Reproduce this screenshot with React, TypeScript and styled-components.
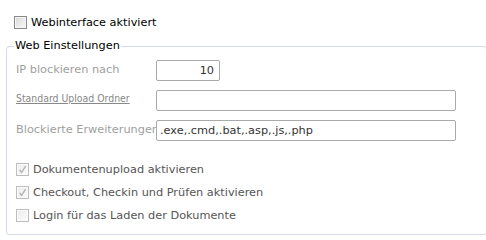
import React from "react";
import styled, { createGlobalStyle } from "styled-components";

const GlobalStyle = createGlobalStyle`
  html, body {
    margin: 0;
    padding: 0;
    background: #fff;
  }
  body {
    font-family: "DejaVu Sans", Verdana, Tahoma, sans-serif;
    font-size: 11.3px;
    color: #000;
  }
`;

const Page = styled.div`
  width: 486px;
  height: 239px;
  box-sizing: border-box;
  padding: 15px 0 0 6px;
  overflow: hidden;
`;

const CheckRow = styled.label<{ $muted?: boolean }>`
  display: flex;
  align-items: center;
  gap: 4px;
  height: ${(p) => (p.$muted ? "23px" : "15px")};
  color: ${(p) => (p.$muted ? "#555" : "#000")};
  white-space: nowrap;
`;

const TopCheck = styled(CheckRow)`
  padding-left: 8px;
`;

const Box = styled.span<{ $dark?: boolean }>`
  display: inline-flex;
  align-items: center;
  justify-content: center;
  box-sizing: border-box;
  width: 13px;
  height: 13px;
  flex: none;
  border: 1px solid ${(p) => (p.$dark ? "#8a8a8a" : "#bdbdbd")};
  background: ${(p) =>
    p.$dark
      ? "linear-gradient(135deg, #d6d6d6 0%, #f0f0f0 70%, #fafafa 100%)"
      : "linear-gradient(135deg, #ececec 0%, #f7f7f7 70%, #fcfcfc 100%)"};
  box-shadow: inset 0 0 0 1px ${(p) => (p.$dark ? "#f4f4f4" : "#fbfbfb")};
`;

const Fieldset = styled.fieldset`
  margin: 9px 0 0 0;
  width: 481px;
  box-sizing: border-box;
  border: 1px solid #d3dce4;
  border-radius: 3px;
  padding: 7px 10px 7px 9px;
  min-width: 0;
`;

const Legend = styled.legend`
  margin-left: -2px;
  padding: 0 1px;
  line-height: 14px;
  color: #000;
`;

const FormRow = styled.div`
  display: flex;
  align-items: flex-start;
  height: 21px;
  margin-bottom: 9px;
`;

const FieldLabel = styled.span<{ $small?: boolean }>`
  width: 140px;
  flex: none;
  white-space: nowrap;
  color: ${(p) => (p.$small ? "#888" : "#a0a0a0")};
  font-family: ${(p) =>
    p.$small
      ? '"DejaVu Sans Condensed", "DejaVu Sans", sans-serif'
      : '"DejaVu Sans", Verdana, sans-serif'};
  font-size: ${(p) => (p.$small ? "10.4px" : "11.3px")};
  text-decoration: ${(p) => (p.$small ? "underline" : "none")};
  padding-top: ${(p) => (p.$small ? "1px" : "3px")};
  line-height: 14px;
`;

const TextInput = styled.input<{ $width: number; $right?: boolean }>`
  box-sizing: border-box;
  width: ${(p) => p.$width}px;
  height: 21px;
  margin: 0;
  border: 1px solid #aaaaaa;
  border-radius: 2px;
  padding: 0 ${(p) => (p.$right ? "5px" : "3px")} 0 3px;
  font-family: "DejaVu Sans", Verdana, sans-serif;
  font-size: 11.3px;
  color: #333;
  text-align: ${(p) => (p.$right ? "right" : "left")};
  background: #fff;
  outline: none;
`;

const CheckList = styled.div`
  margin-top: 17px;
`;

const Tick = () => (
  <svg width="9" height="9" viewBox="0 0 9 9">
    <path d="M1.5 5 L3.6 7.3 L7.6 1.2" fill="none" stroke="#b4b4b4" strokeWidth="1.4" />
  </svg>
);

const options = [
  { text: "Dokumentenupload aktivieren", checked: true },
  { text: "Checkout, Checkin und Prüfen aktivieren", checked: true },
  { text: "Login für das Laden der Dokumente", checked: false },
];

export default function App() {
  return (
    <Page>
      <GlobalStyle />
      <TopCheck>
        <Box $dark />
        <span>Webinterface aktiviert</span>
      </TopCheck>
      <Fieldset>
        <Legend>Web Einstellungen</Legend>
        <FormRow>
          <FieldLabel>IP blockieren nach</FieldLabel>
          <TextInput $width={64} $right defaultValue="10" readOnly />
        </FormRow>
        <FormRow>
          <FieldLabel $small>Standard Upload Ordner</FieldLabel>
          <TextInput $width={300} defaultValue="" readOnly />
        </FormRow>
        <FormRow>
          <FieldLabel>Blockierte Erweiterungen</FieldLabel>
          <TextInput $width={300} defaultValue=".exe,.cmd,.bat,.asp,.js,.php" readOnly />
        </FormRow>
        <CheckList>
          {options.map((o) => (
            <CheckRow $muted key={o.text}>
              <Box>{o.checked && <Tick />}</Box>
              <span>{o.text}</span>
            </CheckRow>
          ))}
        </CheckList>
      </Fieldset>
    </Page>
  );
}
